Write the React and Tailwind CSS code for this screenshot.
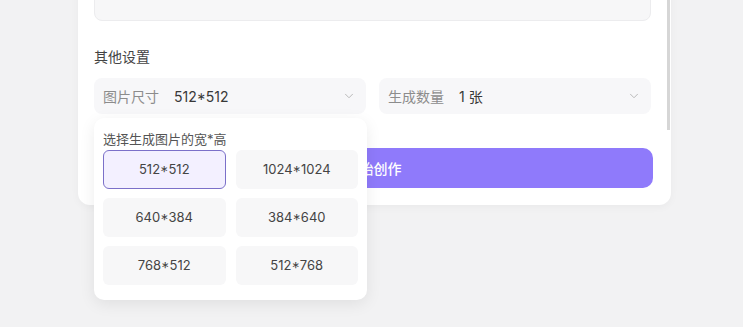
import { ChevronDown } from 'lucide-react'

const sizes = ['512*512', '1024*1024', '640*384', '384*640', '768*512', '512*768']

function SelectBox({ label, value, children }) {
  return (
    <div className="relative flex-1">
      <div className="flex h-[36px] items-center rounded-lg bg-[#f7f7f9] pl-[9px] pr-[10px] text-[14px]">
        <span className="text-[#8c8c8c]">{label}</span>
        <span className="ml-[15px] text-[#383838]">{value}</span>
        <ChevronDown size={14} strokeWidth={1.5} className="ml-auto text-[#b0b0b0]" />
      </div>
      {children}
    </div>
  )
}

export default function App() {
  const selected = '512*512'

  return (
    <div
      className="h-[327px] w-full overflow-hidden bg-[#f2f2f3]"
      style={{ fontFamily: 'Inter, "Noto Sans CJK SC", sans-serif' }}
    >
      <div className="relative ml-[78px] mt-[-75px] w-[593px] rounded-xl bg-white pb-[17px] pl-[16px] pr-[20px] pt-[16px] shadow-[0_2px_8px_rgba(0,0,0,0.04)]">
        <div className="absolute right-[1px] top-0 h-[205px] w-[3px] bg-[#d6d6d6]" />

        <div className="h-[80px] rounded-lg border border-[#ececee] bg-[#f7f7f8]" />

        <div className="mt-[25px] text-[14px] leading-[22px] text-[#444]">其他设置</div>

        <div className="relative z-10 mt-[10px] flex gap-[13px]">
          <SelectBox label="图片尺寸" value="512*512">
            <div className="absolute left-0 top-full mt-[4px] w-[273px] rounded-[10px] bg-white px-[9px] pb-[15px] pt-[12px] shadow-[0_4px_16px_rgba(0,0,0,0.08)]">
              <div className="text-[13px] leading-[18px] text-[#555]">选择生成图片的宽*高</div>
              <div className="mt-[2px] grid grid-cols-2 gap-x-[10px] gap-y-[9px]">
                {sizes.map((s) =>
                  s === selected ? (
                    <div
                      key={s}
                      className="flex h-[39px] items-center justify-center rounded-md border border-[#7b70c9] bg-[#f3f0ff] text-[13px] text-[#444]"
                    >
                      {s}
                    </div>
                  ) : (
                    <div
                      key={s}
                      className="flex h-[39px] items-center justify-center rounded-md bg-[#f7f7f8] text-[13px] text-[#444]"
                    >
                      {s}
                    </div>
                  )
                )}
              </div>
            </div>
          </SelectBox>
          <SelectBox label="生成数量" value="1 张" />
        </div>

        <button className="mt-[34px] flex h-[40px] w-[559px] items-center justify-center rounded-[10px] bg-[#8f7afb] text-[14px] font-medium text-white">
          开始创作
        </button>
      </div>
    </div>
  )
}
